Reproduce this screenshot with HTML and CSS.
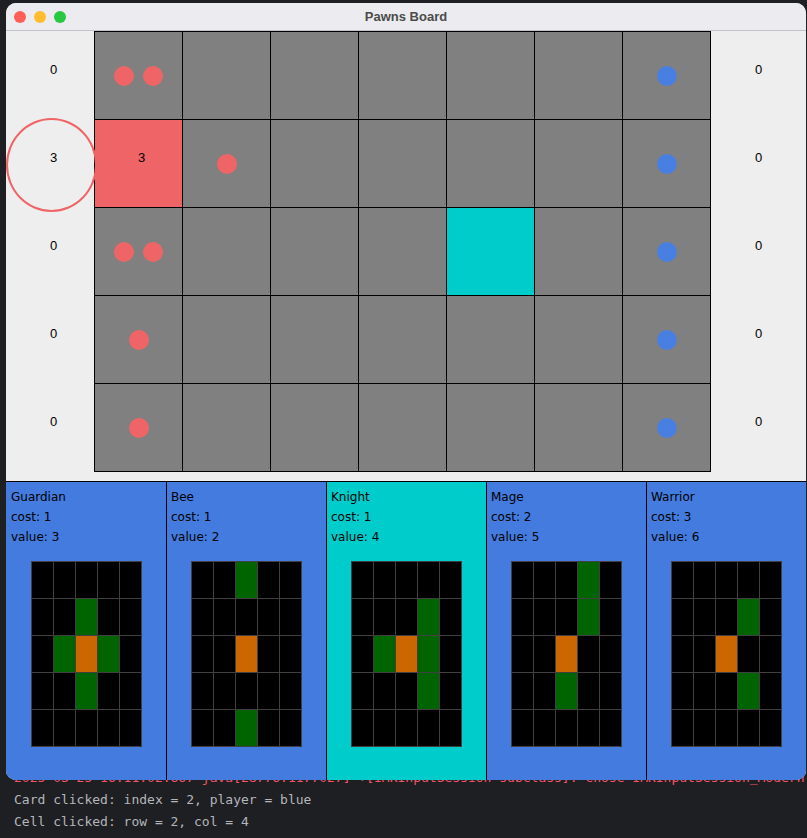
FILE: index.html
```html
<!DOCTYPE html>
<html>
<head>
<meta charset="utf-8">
<title>Pawns Board</title>
<link rel="stylesheet" href="styles.css">
</head>
<body>
<div class="window">
  <div class="titlebar">
    <div class="lights">
      <span class="light close"></span>
      <span class="light min"></span>
      <span class="light max"></span>
    </div>
    <div class="title">Pawns Board</div>
  </div>
  <div class="content">
    <div class="top">
      <div class="scores">
        <div class="score"><span>0</span></div>
        <div class="score selected"><span>3</span></div>
        <div class="score"><span>0</span></div>
        <div class="score"><span>0</span></div>
        <div class="score"><span>0</span></div>
      </div>
      <div class="board">
        <div class="cell"><span class="pawn red"></span><span class="pawn red"></span></div>
        <div class="cell"></div><div class="cell"></div><div class="cell"></div><div class="cell"></div><div class="cell"></div>
        <div class="cell"><span class="pawn blue"></span></div>

        <div class="cell owned"><span class="val">3</span></div>
        <div class="cell"><span class="pawn red"></span></div>
        <div class="cell"></div><div class="cell"></div><div class="cell"></div><div class="cell"></div>
        <div class="cell"><span class="pawn blue"></span></div>

        <div class="cell"><span class="pawn red"></span><span class="pawn red"></span></div>
        <div class="cell"></div><div class="cell"></div><div class="cell"></div>
        <div class="cell picked"></div>
        <div class="cell"></div>
        <div class="cell"><span class="pawn blue"></span></div>

        <div class="cell"><span class="pawn red"></span></div>
        <div class="cell"></div><div class="cell"></div><div class="cell"></div><div class="cell"></div><div class="cell"></div>
        <div class="cell"><span class="pawn blue"></span></div>

        <div class="cell"><span class="pawn red"></span></div>
        <div class="cell"></div><div class="cell"></div><div class="cell"></div><div class="cell"></div><div class="cell"></div>
        <div class="cell"><span class="pawn blue"></span></div>
      </div>
      <div class="scores">
        <div class="score"><span>0</span></div>
        <div class="score"><span>0</span></div>
        <div class="score"><span>0</span></div>
        <div class="score"><span>0</span></div>
        <div class="score"><span>0</span></div>
      </div>
    </div>
    <div class="hand">
      <div class="card">
        <div class="line">Guardian</div>
        <div class="line">cost: 1</div>
        <div class="line">value: 3</div>
        <div class="grid">
          <i></i><i></i><i></i><i></i><i></i>
          <i></i><i></i><i class="g"></i><i></i><i></i>
          <i></i><i class="g"></i><i class="o"></i><i class="g"></i><i></i>
          <i></i><i></i><i class="g"></i><i></i><i></i>
          <i></i><i></i><i></i><i></i><i></i>
        </div>
      </div>
      <div class="card">
        <div class="line">Bee</div>
        <div class="line">cost: 1</div>
        <div class="line">value: 2</div>
        <div class="grid">
          <i></i><i></i><i class="g"></i><i></i><i></i>
          <i></i><i></i><i></i><i></i><i></i>
          <i></i><i></i><i class="o"></i><i></i><i></i>
          <i></i><i></i><i></i><i></i><i></i>
          <i></i><i></i><i class="g"></i><i></i><i></i>
        </div>
      </div>
      <div class="card active">
        <div class="line">Knight</div>
        <div class="line">cost: 1</div>
        <div class="line">value: 4</div>
        <div class="grid">
          <i></i><i></i><i></i><i></i><i></i>
          <i></i><i></i><i></i><i class="g"></i><i></i>
          <i></i><i class="g"></i><i class="o"></i><i class="g"></i><i></i>
          <i></i><i></i><i></i><i class="g"></i><i></i>
          <i></i><i></i><i></i><i></i><i></i>
        </div>
      </div>
      <div class="card">
        <div class="line">Mage</div>
        <div class="line">cost: 2</div>
        <div class="line">value: 5</div>
        <div class="grid">
          <i></i><i></i><i></i><i class="g"></i><i></i>
          <i></i><i></i><i></i><i class="g"></i><i></i>
          <i></i><i></i><i class="o"></i><i></i><i></i>
          <i></i><i></i><i class="g"></i><i></i><i></i>
          <i></i><i></i><i></i><i></i><i></i>
        </div>
      </div>
      <div class="card">
        <div class="line">Warrior</div>
        <div class="line">cost: 3</div>
        <div class="line">value: 6</div>
        <div class="grid">
          <i></i><i></i><i></i><i></i><i></i>
          <i></i><i></i><i></i><i class="g"></i><i></i>
          <i></i><i></i><i class="o"></i><i></i><i></i>
          <i></i><i></i><i></i><i class="g"></i><i></i>
          <i></i><i></i><i></i><i></i><i></i>
        </div>
      </div>
    </div>
  </div>
</div>
<div class="console">
  <div class="log err">2025-03-25 16:11:02.667 java[28776:1177027] +[IMKInputSession subclass]: chose IMKInputSession_Modern</div>
  <div class="log">Card clicked: index = 2, player = blue</div>
  <div class="log">Cell clicked: row = 2, col = 4</div>
</div>
</body>
</html>
```

FILE: styles.css
```css
* { box-sizing: border-box; }

html, body {
  margin: 0;
  padding: 0;
}

body {
  background: #1e1f22;
  width: 807px;
  height: 838px;
  overflow: hidden;
  padding-top: 3px;
  padding-left: 6px;
}

.window {
  position: relative;
  z-index: 1;
  width: 800px;
  border-radius: 10px;
  overflow: hidden;
  background: #eeeeee;
}

.titlebar {
  height: 28px;
  background: #ececf0;
  border-bottom: 1px solid #c4c4c8;
  display: flex;
  align-items: center;
  position: relative;
}

.lights {
  display: flex;
  gap: 8px;
  padding-left: 8px;
}

.light {
  width: 12px;
  height: 12px;
  border-radius: 50%;
  display: block;
}
.light.close { background: #ff5f57; }
.light.min { background: #febc2e; }
.light.max { background: #28c840; }

.title {
  position: absolute;
  left: 0;
  right: 0;
  text-align: center;
  font-family: "Liberation Sans", Arial, sans-serif;
  font-weight: bold;
  font-size: 13px;
  color: #4b4b4b;
  pointer-events: none;
}

.content {
  background: #eeeeee;
}

.top {
  display: flex;
  height: 450px;
}

.scores {
  width: 88px;
  padding-top: 1px;
  display: flex;
  flex-direction: column;
}

.score {
  height: 88px;
  padding-left: 44px;
  padding-top: 30px;
  font-family: "Liberation Sans", Arial, sans-serif;
  font-size: 13px;
  line-height: 16px;
  color: #000;
  position: relative;
}

.score.selected::before {
  content: "";
  position: absolute;
  left: 0;
  top: -2px;
  width: 87px;
  height: 90px;
  border: 2px solid #ef6466;
  border-radius: 50%;
}

.board {
  width: 617px;
  height: 441px;
  background: #000;
  padding: 1px;
  display: grid;
  grid-template-columns: repeat(7, 87px);
  grid-template-rows: repeat(5, 87px);
  gap: 1px;
}

.cell {
  background: #808080;
  display: flex;
  align-items: center;
  justify-content: center;
  gap: 9px;
}

.cell.owned {
  background: #ef6466;
  display: block;
  padding-left: 43px;
  padding-top: 30px;
  font-family: "Liberation Sans", Arial, sans-serif;
  font-size: 13px;
  line-height: 16px;
  color: #000;
}

.cell.picked {
  background: #00cccc;
}

.pawn {
  width: 20px;
  height: 20px;
  border-radius: 50%;
  display: block;
}
.pawn.red { background: #ef6466; }
.pawn.blue { background: #4a7fe2; }

.hand {
  height: 299px;
  border-top: 1px solid #000;
  display: grid;
  grid-template-columns: repeat(5, 160px);
  background: #437bde;
}

.card {
  background: #437bde;
  padding: 5px 0 0 5px;
  font-family: "DejaVu Sans", Verdana, sans-serif;
  font-size: 12px;
  line-height: 20px;
  color: #000;
}

.card + .card {
  border-left: 1px solid #000;
  padding-left: 4px;
}

.card.active {
  background: #00cccc;
}

.grid {
  width: 111px;
  height: 186px;
  margin: 14px 0 0 20px;
  padding: 1px;
  background: #404040;
  display: grid;
  grid-template-columns: repeat(5, 21px);
  grid-template-rows: repeat(5, 36px);
  gap: 1px;
}

.grid i {
  display: block;
  background: #000;
}
.grid i.g { background: #006400; }
.grid i.o { background: #cc6600; }

.console {
  margin-top: -13px;
  margin-left: -6px;
  padding-left: 14px;
  font-family: "DejaVu Sans Mono", "Liberation Mono", monospace;
  font-size: 13px;
  line-height: 22px;
  color: #b4b6bb;
}

.log {
  white-space: nowrap;
  overflow: hidden;
}

.log.err {
  color: #f75464;
}
```
